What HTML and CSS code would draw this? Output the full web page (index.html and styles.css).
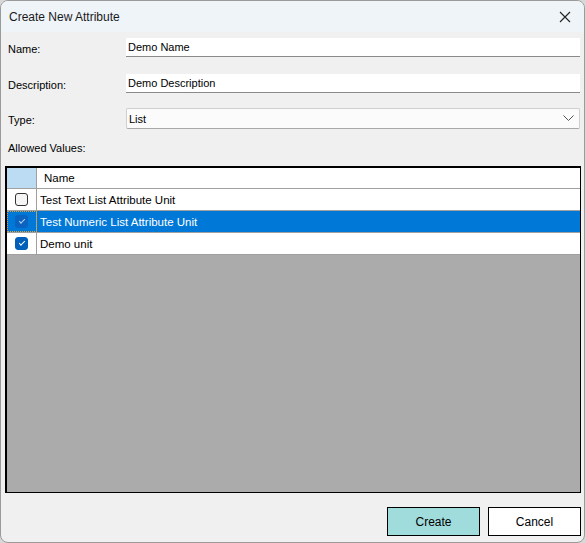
FILE: index.html
```html
<!DOCTYPE html>
<html lang="en">
<head>
    <meta charset="UTF-8">
    <title>Create New Attribute</title>
    <link rel="stylesheet" href="styles.css">
</head>
<body>
    <div class="window">
        <div class="titlebar">
            <span class="title">Create New Attribute</span>
            <svg class="close" width="12" height="12" viewBox="0 0 12 12">
                <path d="M1 1 L11 11 M11 1 L1 11" stroke="#222" stroke-width="1.1" fill="none"/>
            </svg>
        </div>
        <div class="content">
            <div class="field">
                <label>Name:</label>
                <input type="text" class="textbox" value="Demo Name">
            </div>
            <div class="field">
                <label>Description:</label>
                <input type="text" class="textbox" value="Demo Description">
            </div>
            <div class="field combo-field">
                <label>Type:</label>
                <div class="combo">
                    <span>List</span>
                    <svg width="11" height="7" viewBox="0 0 11 7">
                        <path d="M0.5 0.5 L5.5 5.5 L10.5 0.5" stroke="#555" stroke-width="1" fill="none"/>
                    </svg>
                </div>
            </div>
            <div class="section-label">Allowed Values:</div>

            <div class="grid">
                <div class="grid-row header">
                    <div class="cell check-cell"></div>
                    <div class="cell name-cell">Name</div>
                </div>
                <div class="grid-row">
                    <div class="cell check-cell"><span class="checkbox"></span></div>
                    <div class="cell name-cell">Test Text List Attribute Unit</div>
                </div>
                <div class="grid-row selected">
                    <div class="cell check-cell focused"><span class="checkbox checked"></span></div>
                    <div class="cell name-cell">Test Numeric List Attribute Unit</div>
                </div>
                <div class="grid-row">
                    <div class="cell check-cell"><span class="checkbox checked"></span></div>
                    <div class="cell name-cell">Demo unit</div>
                </div>
            </div>

            <div class="buttons">
                <button class="btn primary">Create</button>
                <button class="btn">Cancel</button>
            </div>
        </div>
    </div>
</body>
</html>
```

FILE: styles.css
```css
body {
    margin: 0;
    background: #d8d8d8;
    font-family: "Segoe UI", "Liberation Sans", Arial, sans-serif;
    font-size: 11px;
    color: #000;
}

.window {
    width: 583px;
    height: 541px;
    border: 1px solid #9a9a9a;
    border-radius: 8px;
    background: #f0f0f0;
    overflow: hidden;
    display: flex;
    flex-direction: column;
}

.titlebar {
    height: 31px;
    background: #eff4f9;
    display: flex;
    align-items: center;
    justify-content: space-between;
    padding: 0 9px 0 8px;
    flex-shrink: 0;
}

.title {
    font-size: 12px;
    color: #1a1a1a;
}

.close {
    margin-right: 4px;
}

.content {
    flex: 1;
    padding: 6px 3px 0 4px;
    display: flex;
    flex-direction: column;
}

.field {
    display: flex;
    align-items: center;
    height: 19px;
    margin-bottom: 17px;
    padding-left: 3px;
    padding-right: 1px;
}

.field:nth-child(2) {
    margin-bottom: 15px;
}

.field.combo-field {
    height: 21px;
    margin-bottom: 0;
}

.field label {
    width: 118px;
    padding-top: 2px;
}

.textbox {
    flex: 1;
    height: 19px;
    box-sizing: border-box;
    border: none;
    border-bottom: 1px solid #8a8a8a;
    background: #fff;
    padding: 0 2px;
    font: inherit;
    margin: 0;
    outline: none;
}

.combo {
    flex: 1;
    height: 21px;
    box-sizing: border-box;
    border: 1px solid #cfcfcf;
    border-bottom-color: #a8a8a8;
    border-radius: 2px;
    background: #fbfbfb;
    display: flex;
    align-items: center;
    justify-content: space-between;
    padding: 0 5px 0 2px;
}

.section-label {
    padding: 12px 0 0 3px;
    line-height: 14px;
    height: 25px;
}

.grid {
    width: 573px;
    height: 324px;
    border: 1px solid #000;
    border-top-width: 2px;
    border-left-width: 2px;
    background: #ababab;
}

.grid-row {
    display: flex;
    height: 21px;
    background: #fff;
    border-bottom: 1px solid #a0a0a0;
}

.grid-row.header {
    height: 20px;
}

.cell {
    display: flex;
    align-items: center;
}

.check-cell {
    width: 30px;
    justify-content: center;
    border-right: 1px solid #a0a0a0;
    box-sizing: border-box;
}

.header .check-cell {
    background: #bcdcf4;
}

.name-cell {
    flex: 1;
    padding-left: 3px;
    font-size: 11.5px;
}

.header .name-cell {
    padding-left: 7px;
}

.grid-row.selected {
    background: #0078d7;
    color: #fff;
}

.check-cell.focused {
    outline: 1px dotted #e0a030;
    outline-offset: -1px;
}

.checkbox {
    width: 11px;
    height: 11px;
    border: 1px solid #333;
    border-radius: 3px;
    background: #f5f5f5;
    display: flex;
    align-items: center;
    justify-content: center;
}

.checkbox.checked {
    border-color: #005fb8;
    background: #005fb8;
}

.checkbox.checked::after {
    content: "";
    width: 5px;
    height: 2px;
    border-left: 1px solid #fff;
    border-bottom: 1px solid #fff;
    transform: translateY(-1px) rotate(-45deg);
}

.selected .checkbox.checked {
    background: #0a63c0;
    border-color: #0a63c0;
}

.selected .checkbox.checked::after {
    border-color: #b8d4f0;
}

.buttons {
    display: flex;
    justify-content: flex-end;
    gap: 8px;
    margin-top: 14px;
}

.btn {
    width: 93px;
    height: 29px;
    border: 1px solid #000;
    background: #fff;
    font-family: inherit;
    font-size: 12px;
    color: #000;
    padding: 0;
}

.btn.primary {
    background: #a0dcdc;
}
```
